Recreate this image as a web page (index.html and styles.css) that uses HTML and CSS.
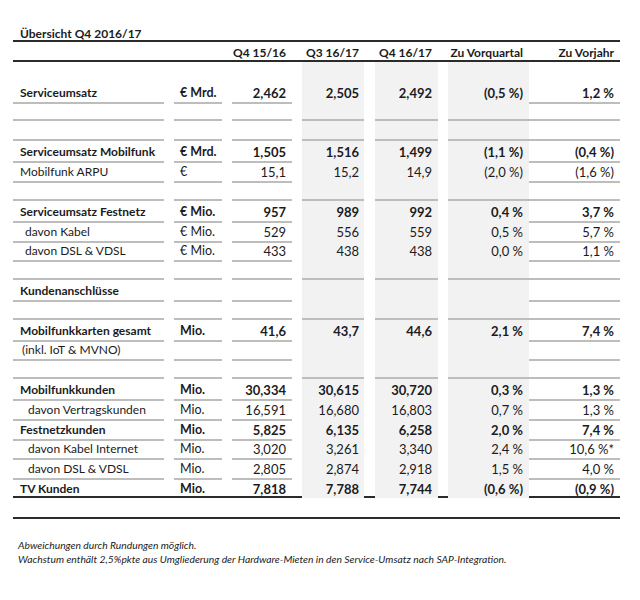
FILE: index.html
```html
<!DOCTYPE html>
<html lang="de">
<head>
<meta charset="utf-8">
<title>Übersicht Q4 2016/17</title>
<link rel="stylesheet" href="styles.css">
</head>
<body>
<div class="sheet">
  <div class="title">Übersicht Q4 2016/17</div>
  <div class="row head">
    <div class="c lbl"></div><div class="c unit"></div><div class="c v1">Q4 15/16</div><div class="c v2">Q3 16/17</div><div class="c v3">Q4 16/17</div><div class="c d1">Zu Vorquartal</div><div class="c d2">Zu Vorjahr</div>
  </div>
  <div class="row body first">
    <div class="c lbl"></div><div class="c unit"></div><div class="c v1"></div><div class="c v2"></div><div class="c v3"></div><div class="c d1"></div><div class="c d2"></div>
  </div>
  <div class="row body b">
    <div class="c lbl">Serviceumsatz</div><div class="c unit">€ Mrd.</div><div class="c v1">2,462</div><div class="c v2">2,505</div><div class="c v3">2,492</div><div class="c d1">(0,5 %)</div><div class="c d2">1,2 %</div>
  </div>
  <div class="row body">
    <div class="c lbl"></div><div class="c unit"></div><div class="c v1"></div><div class="c v2"></div><div class="c v3"></div><div class="c d1"></div><div class="c d2"></div>
  </div>
  <div class="row body">
    <div class="c lbl"></div><div class="c unit"></div><div class="c v1"></div><div class="c v2"></div><div class="c v3"></div><div class="c d1"></div><div class="c d2"></div>
  </div>
  <div class="row body b">
    <div class="c lbl">Serviceumsatz Mobilfunk</div><div class="c unit">€ Mrd.</div><div class="c v1">1,505</div><div class="c v2">1,516</div><div class="c v3">1,499</div><div class="c d1">(1,1 %)</div><div class="c d2">(0,4 %)</div>
  </div>
  <div class="row body">
    <div class="c lbl">Mobilfunk ARPU</div><div class="c unit">€</div><div class="c v1">15,1</div><div class="c v2">15,2</div><div class="c v3">14,9</div><div class="c d1">(2,0 %)</div><div class="c d2">(1,6 %)</div>
  </div>
  <div class="row body">
    <div class="c lbl"></div><div class="c unit"></div><div class="c v1"></div><div class="c v2"></div><div class="c v3"></div><div class="c d1"></div><div class="c d2"></div>
  </div>
  <div class="row body b">
    <div class="c lbl">Serviceumsatz Festnetz</div><div class="c unit">€ Mio.</div><div class="c v1">957</div><div class="c v2">989</div><div class="c v3">992</div><div class="c d1">0,4 %</div><div class="c d2">3,7 %</div>
  </div>
  <div class="row body ind">
    <div class="c lbl">davon Kabel</div><div class="c unit">€ Mio.</div><div class="c v1">529</div><div class="c v2">556</div><div class="c v3">559</div><div class="c d1">0,5 %</div><div class="c d2">5,7 %</div>
  </div>
  <div class="row body ind">
    <div class="c lbl">davon DSL &amp; VDSL</div><div class="c unit">€ Mio.</div><div class="c v1">433</div><div class="c v2">438</div><div class="c v3">438</div><div class="c d1">0,0 %</div><div class="c d2">1,1 %</div>
  </div>
  <div class="row body">
    <div class="c lbl"></div><div class="c unit"></div><div class="c v1"></div><div class="c v2"></div><div class="c v3"></div><div class="c d1"></div><div class="c d2"></div>
  </div>
  <div class="row body b">
    <div class="c lbl">Kundenanschlüsse</div><div class="c unit"></div><div class="c v1"></div><div class="c v2"></div><div class="c v3"></div><div class="c d1"></div><div class="c d2"></div>
  </div>
  <div class="row body">
    <div class="c lbl"></div><div class="c unit"></div><div class="c v1"></div><div class="c v2"></div><div class="c v3"></div><div class="c d1"></div><div class="c d2"></div>
  </div>
  <div class="row body b">
    <div class="c lbl">Mobilfunkkarten gesamt</div><div class="c unit">Mio.</div><div class="c v1">41,6</div><div class="c v2">43,7</div><div class="c v3">44,6</div><div class="c d1">2,1 %</div><div class="c d2">7,4 %</div>
  </div>
  <div class="row body inkl">
    <div class="c lbl">(inkl. IoT &amp; MVNO)</div><div class="c unit"></div><div class="c v1"></div><div class="c v2"></div><div class="c v3"></div><div class="c d1"></div><div class="c d2"></div>
  </div>
  <div class="row body">
    <div class="c lbl"></div><div class="c unit"></div><div class="c v1"></div><div class="c v2"></div><div class="c v3"></div><div class="c d1"></div><div class="c d2"></div>
  </div>
  <div class="row body b">
    <div class="c lbl">Mobilfunkkunden</div><div class="c unit">Mio.</div><div class="c v1">30,334</div><div class="c v2">30,615</div><div class="c v3">30,720</div><div class="c d1">0,3 %</div><div class="c d2">1,3 %</div>
  </div>
  <div class="row body ind2">
    <div class="c lbl">davon Vertragskunden</div><div class="c unit">Mio.</div><div class="c v1">16,591</div><div class="c v2">16,680</div><div class="c v3">16,803</div><div class="c d1">0,7 %</div><div class="c d2">1,3 %</div>
  </div>
  <div class="row body b">
    <div class="c lbl">Festnetzkunden</div><div class="c unit">Mio.</div><div class="c v1">5,825</div><div class="c v2">6,135</div><div class="c v3">6,258</div><div class="c d1">2,0 %</div><div class="c d2">7,4 %</div>
  </div>
  <div class="row body ind2">
    <div class="c lbl">davon Kabel Internet</div><div class="c unit">Mio.</div><div class="c v1">3,020</div><div class="c v2">3,261</div><div class="c v3">3,340</div><div class="c d1">2,4 %</div><div class="c d2">10,6 %*</div>
  </div>
  <div class="row body ind2">
    <div class="c lbl">davon DSL &amp; VDSL</div><div class="c unit">Mio.</div><div class="c v1">2,805</div><div class="c v2">2,874</div><div class="c v3">2,918</div><div class="c d1">1,5 %</div><div class="c d2">4,0 %</div>
  </div>
  <div class="row body b last">
    <div class="c lbl">TV Kunden</div><div class="c unit">Mio.</div><div class="c v1">7,818</div><div class="c v2">7,788</div><div class="c v3">7,744</div><div class="c d1">(0,6 %)</div><div class="c d2">(0,9 %)</div>
  </div>
  <div class="row end"></div>
  <div class="notes">
    <p>Abweichungen durch Rundungen möglich.</p>
    <p>Wachstum enthält 2,5%pkte aus Umgliederung der Hardware-Mieten in den Service-Umsatz nach SAP-Integration.</p>
  </div>
</div>
</body>
</html>
```

FILE: styles.css
```css
* { box-sizing: border-box; }
html, body { margin: 0; background: #ffffff; }
body {
  font-family: "Lato", "Carlito", sans-serif;
  font-size: 12px;
  color: #1b1b22;
}
.sheet { width: 607px; margin: 22px 0 0 13px; }
.title {
  height: 20px;
  line-height: 18px;
  padding: 3px 0 0 7px;
  font-weight: 700;
  border-bottom: 2px solid #2b2b2b;
}
.row {
  display: grid;
  grid-template-columns: 151px 10px 48px 10px 60px 10px 62px 11px 63px 10px 81px 91px;
  height: 19.82px;
}
.head { height: 20px; border-bottom: 2px solid #2b2b2b; font-weight: 700; }
.c { white-space: nowrap; line-height: 18px; padding-top: 2px; }
.body .c { border-bottom: 2px solid #bdbdbd; }
.body.first .c { border-bottom-color: transparent; }
.lbl { grid-column: 1; padding-left: 7px; }
.unit { grid-column: 3; padding-left: 6px; }
.v1 { grid-column: 5; text-align: right; padding-right: 6px; }
.v2 { grid-column: 7; text-align: right; padding-right: 5px; }
.v3 { grid-column: 9; text-align: right; padding-right: 6px; }
.d1 { grid-column: 11; text-align: right; padding-right: 6px; }
.d2 { grid-column: 12; text-align: right; padding-right: 6px; }
.body .unit { font-size: 12.5px; }
.body .v1, .body .v2, .body .v3, .body .d1, .body .d2 { font-size: 13px; }
.body .v2, .body .v3, .body .d1 { background: #f2f2f2; }
.b { font-weight: 700; }
.ind .lbl { padding-left: 12px; }
.ind2 .lbl { padding-left: 15px; }
.inkl .lbl { padding-left: 9px; }
.body.last { border-bottom: 2px solid #2b2b2b; }
.body.last .c { border-bottom: 0; }
.end { height: 21px; border-bottom: 2px solid #2b2b2b; }
.notes {
  margin: 19px 0 0 5px;
  font-style: italic;
  font-size: 10.3px;
  line-height: 14px;
}
.notes p { margin: 0; }
```
